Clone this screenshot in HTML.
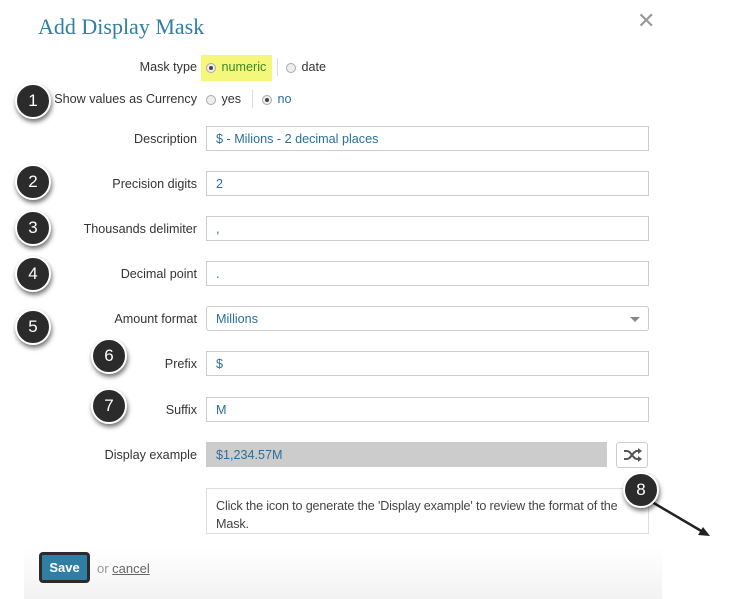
<!DOCTYPE html>
<html><head><style>
body{margin:0;width:736px;height:599px;background:#fff;position:relative;overflow:hidden;font-family:"Liberation Sans",sans-serif;font-size:13px;color:#333}
.a{position:absolute}
h1{position:absolute;left:38px;top:14px;margin:0;font:22px "Liberation Serif",serif;color:#2f7fa4;font-weight:normal}
.lbl{position:absolute;right:539px;text-align:right;white-space:nowrap;font-size:12.6px}
.inp{position:absolute;left:206px;height:25px;border:1px solid #ccc;box-sizing:border-box;width:443px;padding:6px 9px;color:#2a6f9a;font-size:12.6px;line-height:13px}
.rd{display:inline-block;width:10px;height:10px;border:1px solid #aaa;border-radius:50%;background:#eee;vertical-align:-2px;position:relative;box-sizing:border-box}
.rd.on::after{content:"";position:absolute;left:2px;top:2px;width:4px;height:4px;border-radius:50%;background:#444}
.b{position:absolute;width:32px;height:32px;border-radius:50%;background:#2b2b2b;border:2px solid #fff;box-shadow:1px 3px 5px rgba(0,0,0,.55);color:#fff;font-size:17px;text-align:center;line-height:32px}
</style></head><body>
<div class="a" style="left:24px;top:548px;width:638px;height:51px;background:linear-gradient(#fff,#f2f2f2)"></div>
<h1>Add Display Mask</h1>
<div class="a" style="left:637px;top:8px;font-size:22px;color:#999">✕</div>
<div class="lbl" style="top:60px">Mask type</div>
<div class="a" style="left:201px;top:55px;width:71px;height:26px;background:#f5f77a"></div>
<div class="a" style="left:206px;top:60px;font-size:12.6px"><span class="rd on"></span> <span style="color:#3a8a2a;margin-left:2px">numeric</span></div>
<div class="a" style="left:277px;top:58px;width:1px;height:18px;background:#ddd"></div>
<div class="a" style="left:286px;top:60px;font-size:12.6px"><span class="rd"></span> <span style="margin-left:2px">date</span></div>
<div class="lbl" style="top:92px">Show values as Currency</div>
<div class="a" style="left:206px;top:92px;font-size:12.6px"><span class="rd"></span> <span style="margin-left:2px">yes</span></div>
<div class="a" style="left:252px;top:90px;width:1px;height:18px;background:#ddd"></div>
<div class="a" style="left:262px;top:92px;font-size:12.6px"><span class="rd on"></span> <span style="color:#2a6f9a;margin-left:2px">no</span></div>
<div class="lbl" style="top:132px">Description</div><div class="inp" style="top:126px">$ - Milions - 2 decimal places</div>
<div class="lbl" style="top:177px">Precision digits</div><div class="inp" style="top:171px">2</div>
<div class="lbl" style="top:222px">Thousands delimiter</div><div class="inp" style="top:216px">,</div>
<div class="lbl" style="top:267px">Decimal point</div><div class="inp" style="top:261px">.</div>
<div class="lbl" style="top:312px">Amount format</div><div class="inp" style="top:306px;border-radius:3px">Millions<span class="a" style="right:8px;top:10px;border:5px solid transparent;border-top-color:#888;border-bottom:0"></span></div>
<div class="lbl" style="top:357px">Prefix</div><div class="inp" style="top:351px">$</div>
<div class="lbl" style="top:403px">Suffix</div><div class="inp" style="top:397px">M</div>
<div class="lbl" style="top:448px">Display example</div><div class="inp" style="top:442px;width:401px;background:#ccc;border-color:#ccc">$1,234.57M</div>
<div class="a" style="left:616px;top:442px;width:32px;height:26px;border:1px solid #ccc;border-radius:3px;box-sizing:border-box;background:#fff">
<svg width="30" height="24" viewBox="0 0 30 24"><g fill="none" stroke="#555" stroke-width="2"><path d="M7 8h3c4 0 6 8 10 8h2M7 16h3c4 0 6-8 10-8h2"/></g><path d="M21 5l4 3-4 3zM21 13l4 3-4 3z" fill="#555"/></svg></div>
<div class="a" style="left:206px;top:488px;width:443px;height:46px;border:1px solid #ddd;box-sizing:border-box;padding:8px 4px 8px 9px;line-height:18px;color:#444;font-size:12.6px;letter-spacing:-0.15px">Click the icon to generate the 'Display example' to review the format of the Mask.</div>
<div class="a" style="left:39px;top:552px;width:51px;height:31px;box-sizing:border-box;border:3px solid #2b2b2b;border-radius:4px;background:#2f7fa4;color:#fff;font-weight:bold;text-align:center;line-height:25px">Save</div>
<div class="a" style="left:97px;top:561px;color:#999">or <span style="color:#666;text-decoration:underline">cancel</span></div>
<svg class="a" style="left:640px;top:490px" width="80" height="60"><path d="M12 12L63 42" stroke="#222" stroke-width="2.5"/><path d="M70 46l-12-1 5-8z" fill="#222"/></svg>
<div class="b" style="left:15px;top:83px">1</div>
<div class="b" style="left:15px;top:164px">2</div>
<div class="b" style="left:15px;top:210px">3</div>
<div class="b" style="left:15px;top:256px">4</div>
<div class="b" style="left:15px;top:309px">5</div>
<div class="b" style="left:91px;top:338px">6</div>
<div class="b" style="left:91px;top:388px">7</div>
<div class="b" style="left:623px;top:472px">8</div>
</body></html>
